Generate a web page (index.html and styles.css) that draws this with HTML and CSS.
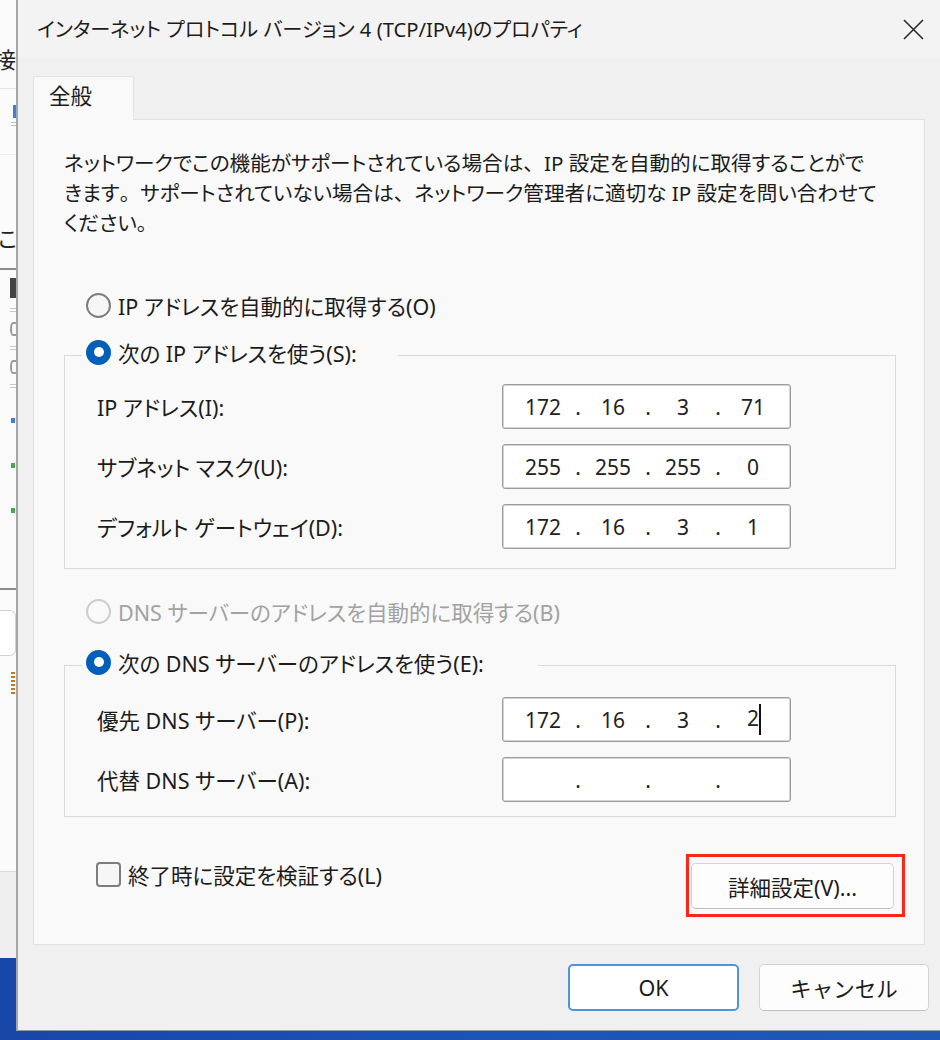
FILE: index.html
```html
<!DOCTYPE html>
<html lang="ja">
<head>
<meta charset="utf-8">
<title>インターネット プロトコル バージョン 4 (TCP/IPv4)のプロパティ</title>
<link rel="stylesheet" href="styles.css">
</head>
<body>
<div class="screen">
  <div class="bgwin">
    <div class="bg-seg bg-seg1"><span class="bg-char">接</span></div>
    <div class="bg-seg bg-seg2"><span class="bg-blue"></span><span class="bg-dash"></span></div>
    <div class="bg-seg bg-seg3"><span class="bg-char2">この</span></div>
    <div class="bg-seg bg-seg4">
      <span class="bg-ico dark"></span><span class="bg-ico lite"></span><span class="bg-ico gear"></span>
      <span class="bg-ico lite"></span><span class="bg-ico gear"></span><span class="bg-ico lite"></span>
      <span class="bg-dot blue"></span><span class="bg-dot green"></span><span class="bg-dot green"></span>
    </div>
    <div class="bg-seg bg-seg5">
      <span class="bg-box"></span>
      <span class="bg-dots"></span>
    </div>
    <div class="bg-seg bg-seg6"></div>
  </div>

  <div class="dialog">
    <div class="titlebar">
      <span class="title">インターネット プロトコル バージョン 4 (TCP/IPv4)のプロパティ</span>
      <svg class="close" width="21" height="21" viewBox="0 0 21 21"><path d="M1 1 L20 20 M20 1 L1 20" stroke="#2b2b2b" stroke-width="1.6" fill="none"/></svg>
    </div>

    <div class="body">
      <div class="tab">全般</div>
      <div class="panel">
        <p class="desc">ネットワークでこの機能がサポートされている場合は<span class="fw">、</span>IP 設定を自動的に取得することがで<br>きます<span class="fw">。</span>サポートされていない場合は<span class="fw">、</span>ネットワーク管理者に適切な IP 設定を問い合わせて<br>ください<span class="fw">。</span></p>

        <div class="opt opt-ipauto"><span class="radio"></span><span>IP アドレスを自動的に取得する(O)</span></div>

        <fieldset class="group group-ip">
          <legend class="legend legend-ip"><span class="radio on"></span><span>次の IP アドレスを使う(S):</span></legend>
          <div class="rows">
            <div class="row"><span>IP アドレス(I):</span>
              <div class="ipfield"><span class="seg">172</span><span class="dot">.</span><span class="seg">16</span><span class="dot">.</span><span class="seg">3</span><span class="dot">.</span><span class="seg">71</span></div></div>
            <div class="row"><span>サブネット マスク(U):</span>
              <div class="ipfield"><span class="seg">255</span><span class="dot">.</span><span class="seg">255</span><span class="dot">.</span><span class="seg">255</span><span class="dot">.</span><span class="seg">0</span></div></div>
            <div class="row"><span>デフォルト ゲートウェイ(D):</span>
              <div class="ipfield"><span class="seg">172</span><span class="dot">.</span><span class="seg">16</span><span class="dot">.</span><span class="seg">3</span><span class="dot">.</span><span class="seg">1</span></div></div>
          </div>
        </fieldset>

        <div class="opt opt-dnsauto disabled"><span class="radio dis"></span><span>DNS サーバーのアドレスを自動的に取得する(B)</span></div>

        <fieldset class="group group-dns">
          <legend class="legend legend-dns"><span class="radio on"></span><span>次の DNS サーバーのアドレスを使う(E):</span></legend>
          <div class="rows">
            <div class="row"><span>優先 DNS サーバー(P):</span>
              <div class="ipfield"><span class="seg">172</span><span class="dot">.</span><span class="seg">16</span><span class="dot">.</span><span class="seg">3</span><span class="dot">.</span><span class="seg">2<span class="caret"></span></span></div></div>
            <div class="row"><span>代替 DNS サーバー(A):</span>
              <div class="ipfield"><span class="seg"></span><span class="dot">.</span><span class="seg"></span><span class="dot">.</span><span class="seg"></span><span class="dot">.</span><span class="seg"></span></div></div>
          </div>
        </fieldset>

        <div class="bottom">
          <div class="check"><span class="checkbox"></span><span>終了時に設定を検証する(L)</span></div>
          <div class="highlight"><button class="btn btn-adv">詳細設定(V)...</button></div>
        </div>
      </div>
    </div>

    <div class="footer">
      <button class="btn btn-ok">OK</button>
      <button class="btn btn-cancel">キャンセル</button>
    </div>
  </div>
</div>
</body>
</html>
```

FILE: styles.css
```css
* { box-sizing: border-box; }
html, body { margin: 0; padding: 0; }
body {
  width: 940px;
  height: 1040px;
  overflow: hidden;
  font-family: "Noto Sans", "Noto Sans CJK JP", sans-serif;
  font-feature-settings: "palt";
  color: #1b1b1b;
  font-size: 21.5px;
}
.screen {
  display: flex;
  align-items: flex-start;
  width: 940px;
  height: 1040px;
  background: linear-gradient(90deg, #1846a9 0%, #1d55b8 60%, #2057b5 100%);
}

/* background window strip */
.bgwin {
  width: 16px;
  height: 958px;
  background: #fbfbfb;
  overflow: hidden;
  display: flex;
  flex-direction: column;
}
.bg-seg { width: 16px; overflow: hidden; display: flex; flex-direction: column; }
.bg-seg1 { height: 89px; border-bottom: 1px solid #e4e4e4; padding-top: 46px; }
.bg-char { font-size: 22px; line-height: 26px; margin-left: -6px; white-space: nowrap; color: #222; }
.bg-seg2 { height: 66px; border-bottom: 1px solid #ececec; align-items: flex-end; padding-top: 16px; gap: 4px; }
.bg-blue { width: 3px; height: 13px; background: #3d7fd6; }
.bg-dash { width: 5px; height: 4px; border-top: 1px solid #bbb; border-bottom: 1px solid #bbb; }
.bg-seg3 { height: 115px; border-bottom: 2px solid #8d8d8d; padding-top: 70px; }
.bg-char2 { font-size: 22px; line-height: 26px; white-space: nowrap; color: #222; margin-left: -2px; }
.bg-seg4 { height: 320px; border-bottom: 2px solid #8d8d8d; align-items: flex-end; padding-top: 8px; gap: 10px; }
.bg-ico { width: 6px; height: 8px; }
.bg-ico.dark { height: 20px; background: #444; }
.bg-ico.lite { height: 4px; border-top: 1px solid #c8c8c8; border-bottom: 1px solid #c8c8c8; }
.bg-ico.gear { height: 14px; border-radius: 50% 0 0 50%; border: 2px solid #9a9a9a; border-right: none; }
.bg-dot { width: 4px; height: 5px; margin-right: 1px; }
.bg-dot.blue { background: #3d7fd6; margin-top: 20px; }
.bg-dot.green { background: #4aa64a; margin-top: 30px; }
.bg-seg5 { height: 282px; border-bottom: 1px solid #dcdcdc; padding-top: 20px; }
.bg-box { width: 30px; height: 46px; margin-left: -14px; border: 1px solid #d0d0d0; border-radius: 6px; background: #fff; }
.bg-dots { width: 4px; height: 22px; margin: 16px 1px 0 auto; background: repeating-linear-gradient(180deg, #c07a25 0 2px, transparent 2px 4px); }
.bg-seg6 { height: 86px; background: #efefef; }

/* dialog */
.dialog {
  flex: 1;
  height: 1031px;
  border-left: 2px solid #a6a6a6;
  border-bottom: 1px solid #9a9a9a;
  background: #f0f0f0;
  display: flex;
  flex-direction: column;
}
.titlebar {
  height: 58px;
  background: #f3f3f3;
  display: flex;
  align-items: center;
  padding: 0 16px 0 19px;
}
.title { font-size: 20.2px; line-height: 28px; color: #1c1c1c; white-space: nowrap; }
.close { margin-left: auto; display: block; }

.body { padding: 18px 15px 0 15px; display: flex; flex-direction: column; }
.tab {
  position: relative;
  width: 101px;
  height: 44px;
  margin-bottom: -1px;
  background: #f9f9f9;
  border: 1px solid #e3e3e3;
  border-bottom: none;
  border-radius: 2px 2px 0 0;
  padding-left: 15px;
  line-height: 38px;
  font-size: 21.5px;
}
.panel {
  height: 826px;
  background: #f9f9f9;
  border: 1px solid #e1e1e1;
  padding: 28px 28px 0 30px;
  display: flex;
  flex-direction: column;
}
.desc { margin: 0; line-height: 30px; white-space: nowrap; font-size: 20.6px; }
.fw { font-feature-settings: normal; }

.opt { display: flex; align-items: center; gap: 7px; height: 30px; padding-left: 22px; white-space: nowrap; }
.opt-ipauto { margin-top: 52px; }
.opt-dnsauto { margin-top: 27px; }
.disabled { color: #a2a2a2; }

.radio {
  width: 25px; height: 25px; border-radius: 50%;
  border: 2px solid #7d7d7d; background: #f6f6f6;
  flex: none; display: inline-flex; align-items: center; justify-content: center;
}
.radio.dis { border-color: #cdcdcd; background: #fafafa; }
.radio.on { border: none; background: #005fb8; }
.radio.on::after { content: ""; width: 10px; height: 10px; border-radius: 50%; background: #fff; }

.group { margin: 17px 0 0 0; padding: 0; border: 1px solid #dadada; min-width: 0; }
.group-ip { margin-top: 17px; }
.group-dns { margin-top: 21px; }
.legend {
  display: flex; align-items: center; gap: 7px;
  height: 36px; padding: 0 0 6px 4px; margin-left: 17px;
  white-space: nowrap;
}
.legend-ip { width: 316px; }
.legend-dns { width: 456px; }
.rows { display: flex; flex-direction: column; gap: 15px; padding-left: 32px; }
.group-ip .rows { padding-top: 11px; padding-bottom: 19px; }
.group-dns .rows { padding-top: 14px; padding-bottom: 14px; }
.row { display: grid; grid-template-columns: 405px 289px; align-items: center; white-space: nowrap; }

.ipfield {
  width: 289px; height: 45px;
  background: #fff;
  border: 1px solid #9c9c9c;
  border-radius: 3px;
  box-shadow: inset 0 0 0 1px #d4d4d4;
  display: flex; align-items: center;
  padding-left: 10px;
  color: #222;
  font-size: 21px;
}
.seg { width: 60px; text-align: center; }
.dot { width: 10px; text-align: center; }
.caret { display: inline-block; width: 2px; height: 31px; background: #111; margin-right: -2px; vertical-align: middle; }

.bottom { display: flex; justify-content: space-between; align-items: flex-start; margin-top: 37px; margin-right: -9px; }
.check { display: flex; align-items: center; gap: 7px; margin-top: 8px; padding-left: 32px; height: 25px; white-space: nowrap; }
.checkbox { width: 25px; height: 25px; border: 2px solid #7d7d7d; border-radius: 4px; background: #f6f6f6; flex: none; }
.highlight { border: 3px solid #ff2616; padding: 6px 8px 5px 2px; }

.btn {
  font-family: inherit; font-size: 21.5px; color: #1b1b1b;
  background: #fdfdfd;
  border: 1px solid #d3d3d3;
  border-bottom-color: #bdbdbd;
  border-radius: 5px;
  display: flex; align-items: center; justify-content: center;
  padding: 0;
}
.btn-adv { width: 203px; height: 46px; }
.footer { display: flex; justify-content: flex-end; gap: 20px; padding: 19px 11px 0 0; }
.btn-ok { width: 171px; height: 47px; border: 2px solid #4a95de; background: #fff; }
.btn-cancel { width: 170px; height: 47px; }
```
